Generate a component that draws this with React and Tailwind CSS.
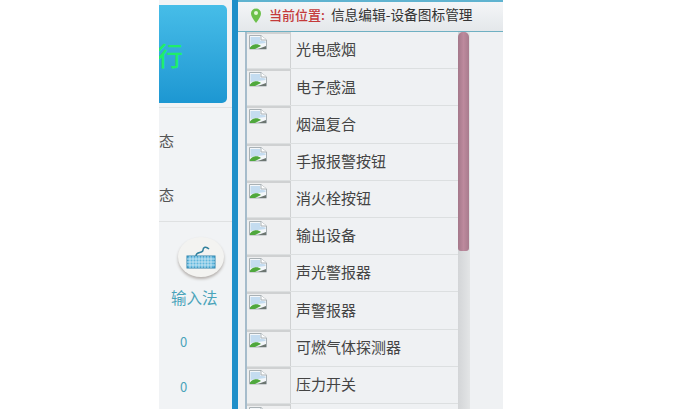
const font = { fontFamily: '"Noto Sans CJK SC", "Liberation Sans", sans-serif' };

const devices = [
  "光电感烟",
  "电子感温",
  "烟温复合",
  "手报报警按钮",
  "消火栓按钮",
  "输出设备",
  "声光警报器",
  "声警报器",
  "可燃气体探测器",
  "压力开关",
  "",
];

// broken image placeholder, the browser's little torn page with a green hill
function BrokenImage() {
  return (
    <svg width="18" height="16" viewBox="0 0 18 16" className="ml-[2px] mt-[1px] shrink-0">
      <path d="M0.5 0.5H12L17.5 5V14H0.500Z" fill="#f4f7fa" stroke="#a9b1b5" />
      <path d="M12 0.5V5H17.5" fill="#fff" stroke="#a9b1b5" />
      <path d="M1.500 2H11V5.500L16.500 6.500V8L1.500 10Z" fill="#c4dcf0" />
      <path d="M1 14V12.500C4 8.500 9 8.500 12 11L6 14Z" fill="#4fa83d" />
      <path d="M9 14L17 11V14Z" fill="#6b7570" />
    </svg>
  );
}

function DeviceRow({ name }) {
  return (
    <div className="flex h-[37.2px] shrink-0 border-b border-[#dcdfe0]">
      <div className="flex h-full w-[44px] shrink-0 items-start border-r border-t-2 border-[#cfd1d2] bg-[#eeeff0]">
        <BrokenImage />
      </div>
      <div className="flex flex-1 items-center pb-[1px] pl-[5px] text-[15px] text-[#444]">{name}</div>
    </div>
  );
}

function KeyboardIcon() {
  return (
    <div className="flex h-[40px] w-[46px] items-center justify-center rounded-[50%] bg-[#f3f3f1] shadow-[0_2px_3px_#b5b0ad]">
      <svg width="30" height="24" viewBox="0 0 30 24">
        <path d="M10 11C10 6 17 9 17 5C17 2 20 1 23 4" fill="none" stroke="#2f7f9c" strokeWidth="1.500" />
        <rect x="1" y="11" width="28" height="12" fill="#5fb6dc" stroke="#2f84ad" />
        <path d="M1 14H29M1 17H29M1 20H29M4 11V23M7 11V23M10 11V23M13 11V23M16 11V23M19 11V23M22 11V23M25 11V23" stroke="#d8eef8" strokeWidth="0.800" />
      </svg>
    </div>
  );
}

export default function App() {
  return (
    <div className="flex h-[409px] w-[680px] overflow-hidden bg-white" style={font}>
      <div className="w-[159px] shrink-0" />

      {/* left panel */}
      <div className="flex w-[73px] shrink-0 flex-col bg-[#f1f3f5]">
        <div className="h-[5px] shrink-0" />
        <div className="flex h-[98px] w-[68px] shrink-0 items-center overflow-hidden rounded-r-[5px] bg-gradient-to-b from-[#46bde8] to-[#1c97d2]">
          <span className="-ml-[2px] pt-[1px] text-[26px] font-medium leading-none text-[#1fee6a]">行</span>
        </div>
        <div className="mt-[4px] h-[1px] shrink-0 bg-[#e0e2e3]" />
        <div className="mt-[23px] h-[20px] shrink-0 text-[15px] leading-[20px] text-[#555]">态</div>
        <div className="mt-[34px] h-[20px] shrink-0 text-[15px] leading-[20px] text-[#555]">态</div>
        <div className="mt-[16px] h-[1px] shrink-0 bg-[#dfe1e2]" />
        <div className="flex flex-col">
          <div className="ml-[19px] mt-[15px]"><KeyboardIcon /></div>
          <div className="ml-[12px] mt-[11px] text-[15.500px] leading-[18px] text-[#4aa3ba]">输入法</div>
          <div className="ml-[21px] mt-[27px] text-[13px] leading-[18px] text-[#4aa3ba]">0</div>
          <div className="ml-[21px] mt-[27px] text-[13px] leading-[18px] text-[#4aa3ba]">0</div>
        </div>
      </div>

      {/* blue divider */}
      <div className="w-[6px] shrink-0 bg-[#1f8fc9]" />

      {/* right panel */}
      <div className="flex w-[265px] shrink-0 flex-col bg-[#eff1f3]">
        <div className="flex h-[32px] shrink-0 items-center gap-[7px] border-b border-[#6fb0c2] border-t-2 border-t-[#5fb3d0] bg-gradient-to-b from-[#f4f6f8] to-[#e4e7ea] pb-[3px] pl-[12px]">
          <svg width="12" height="15" viewBox="0 0 12 15">
            <path d="M6 15C3 11 1 8 1 5.500A5 5 0 0 1 11 5.500C11 8 9 11 6 15Z" fill="#6cc04a" />
            <circle cx="6" cy="5" r="2" fill="#e6f6da" />
          </svg>
          <div className="flex items-center text-[13px] leading-none">
            <span className="font-medium text-[#c43a3a]">当前位置:</span>
            <span className="ml-[6px] text-[13.700px] text-[#333]">信息编辑-设备图标管理</span>
          </div>
        </div>

        <div className="flex min-h-0 flex-1">
          <div className="ml-[7px] flex w-[213px] flex-col overflow-hidden border-l-2 border-[#a6bccb]">
            {devices.map((name, i) => (
              <DeviceRow key={i} name={name} />
            ))}
          </div>
          <div className="flex w-[12px] shrink-0 flex-col bg-gradient-to-r from-[#d3d5d7] to-[#e3e5e6]">
            <div className="h-[219px] w-[11px] rounded-t-[5px] rounded-b-[3px] bg-gradient-to-r from-[#a4788a] via-[#bd8a9d] to-[#a87c8e]" />
          </div>
          <div className="flex-1" />
        </div>
      </div>
    </div>
  );
}
